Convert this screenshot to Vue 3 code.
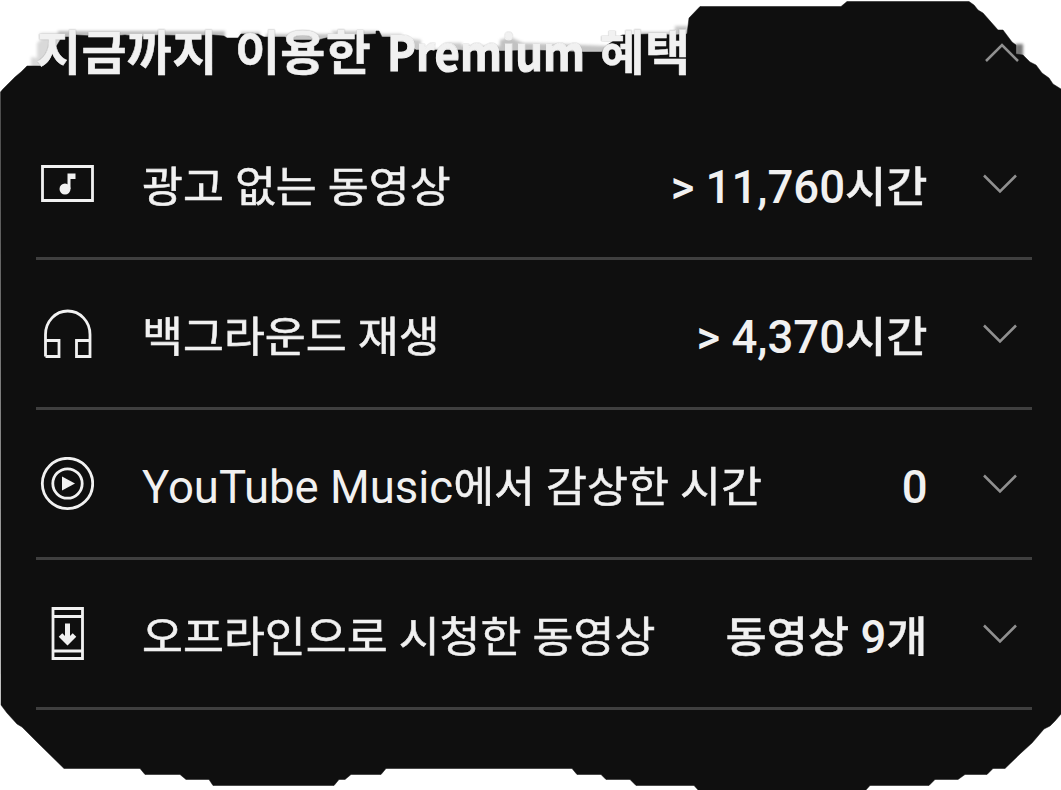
<script setup>
import { ref } from 'vue'

const benefits = ref([
  { icon: 'video', label: '광고 없는 동영상', value: '> 11,760시간' },
  { icon: 'audio', label: '백그라운드 재생', value: '> 4,370시간' },
  { icon: 'music', label: 'YouTube Music에서 감상한 시간', value: '0' },
  { icon: 'offline', label: '오프라인으로 시청한 동영상', value: '동영상 9개' },
])

// Hangul is drawn flatter and heavier than the latin letters, so split the runs
function runs(text) {
  return text.match(/[가-힣]+(?: [가-힣]+)*|[^가-힣]+/g).map((part) => ({
    part,
    hangul: /[가-힣]/.test(part),
  }))
}
</script>

<template>
  <main class="page">
    <!-- Torn sheet behind the list -->
    <svg class="sheet" viewBox="0 0 1061 790" aria-hidden="true">
      <g class="fringe">
        <path d="M40 33H72V60H44L38 68H31V57L37 58V43L41 40Z" fill="#d9d9d9" />
        <path d="M58 31H225V40H58Z" fill="#bdbdbd" />
        <path d="M241 32H260V40H241ZM266 34H331V42H290V39H266Z" fill="#c4c4c4" />
        <path d="M331 31H378L381 34H402V38L421 40V49H440L447 43H462V54H350Z" fill="#c9c9c9" />
        <path d="M460 46H500V40L510 37L523 43L560 44L607 46V53H460Z" fill="#c2c2c2" />
        <path d="M604 38H640V32H675V26H688V40H604Z" fill="#c5c5c5" />
        <path d="M1015 44H1023V57H1015Z" fill="#777777" />
      </g>
      <path
        class="edge"
        d="M0.5 92L3 89L8 84L15 77L21 72L27 66H40L48 60L62 37H76V35L92 36L105 37L125 35L139 37L159 35L189 36L213 35L224 36L227 38H238L241 34H258L264 37H285L290 40H318L330 37V35H350L376 34V31H379L382 37H399L408 44L416 50H460L466 51H508L530 50L558 51L580 52H602L606 46L622 35L652 34L674 35L687 34L689 18L700 6.500H841L847 1.500H969L974 5L978 10L983 13L998 30H1003L1012 42L1016 45V54L1023 55L1030 62L1036 65L1042 73L1049 78L1053 84L1061 89V714L1055 721L1050 726L1044 729L1032 743L1021 753L1005 768.500H993L987 774.500H965L958 779.500H935L929 785.500H870L865 791H699L694 785.500H636L630 779.500H606L601 774.500H577L572 768.500H386L381 774.500H351L345 779.500H339L334 785.500H213L209 779.500H186L180 774.500H145L140 768.500H64L39 744L22 727L17 724L7 713L1 705Z"
      />
    </svg>

    <section class="benefits">
      <header class="heading">
        <h1>
          <span class="korean">지금까지 이용한</span>
          <span class="brand">Premium</span>
          <span class="korean">혜택</span>
        </h1>
        <svg class="chevron" viewBox="0 0 36 22"><path d="M2 19L18 3L34 19" /></svg>
      </header>

      <ul class="list">
        <li v-for="item in benefits" :key="item.label" class="row" :class="item.icon">
          <svg class="icon" viewBox="0 0 54 54">
            <g v-if="item.icon === 'video'">
              <path class="line" d="M2.500 9.500H52.500V43.500H2.500Z" />
              <circle class="solid" cx="25" cy="32" r="5.500" />
              <path class="solid" d="M27.500 16.500H35.500V22H30.500V32H27.500Z" />
            </g>
            <g v-else-if="item.icon === 'audio'">
              <path class="line" d="M5.500 49.500V27.500A22.250 23.500 0 0 1 50 27.500V49.500H36.500V33.500H50M5.500 33.500H19V49.500H5.500" />
            </g>
            <g v-else-if="item.icon === 'music'">
              <circle class="line" cx="27.500" cy="26.500" r="25.200" />
              <circle class="line" cx="27.500" cy="26.500" r="14.700" />
              <path class="solid" d="M22 19.500L35 26.500L22 33.500Z" />
            </g>
            <g v-else>
              <path class="line" d="M13 1.500H42.500V51.500H13ZM13 9.500H42.500M13 44H42.500" />
              <path class="arrow" d="M27.500 16.500V35M20.500 28L27.500 35L34.500 28" />
            </g>
          </svg>
          <span class="label">
            <span v-for="run in runs(item.label)" :key="run.part" :class="{ hangul: run.hangul }">{{ run.part }}</span>
          </span>
          <strong class="value">
            <span v-for="run in runs(item.value)" :key="run.part" :class="{ hangul: run.hangul }">{{ run.part }}</span>
          </strong>
          <svg class="chevron" viewBox="0 0 36 22"><path d="M2 2.500L18 18.500L34 2.500" /></svg>
        </li>
      </ul>
    </section>
  </main>
</template>

<style>
body {
  background: #fff;
}
</style>

<style scoped>
.page {
  position: relative;
  width: 1061px;
  height: 790px;
  overflow: hidden;
  color: #f1f1f1;
  font-family: Roboto, "Noto Sans CJK KR", sans-serif;
}

.sheet {
  position: absolute;
  inset: 0;
  width: 1061px;
  height: 790px;
}

.fringe {
  filter: blur(1.5px);
}

.edge {
  fill: #0f0f0f;
  stroke: #0f0f0f;
  stroke-opacity: .5;
  stroke-width: 1;
}

.benefits {
  position: relative;
  padding: 0 29px 0 36px;
}

.heading {
  display: flex;
  align-items: center;
  height: 107px;
}

h1 {
  display: flex;
  flex: 1;
  gap: 16px;
  margin: 0;
  padding-bottom: 7px;
  font: bold 49px/60px "Noto Sans CJK KR", sans-serif;
  word-spacing: 6px;
  white-space: nowrap;
  text-shadow: 0 0 1px #333;
  -webkit-text-stroke: .5px #f1f1f1;
}

.korean {
  letter-spacing: .3px;
  transform: scaleY(.97);
}

.brand {
  margin-right: -26px;
  transform: scaleX(.89);
  transform-origin: left;
  -webkit-text-stroke: 1.2px #f1f1f1;
}

.list {
  margin: 0;
  padding: 3px 0 0;
  list-style: none;
}

.row {
  display: flex;
  align-items: center;
  box-sizing: border-box;
  height: 150px;
  padding-left: 4px;
  border-bottom: 3px solid #3f3f3f;
}

.icon {
  width: 54px;
  height: 54px;
  margin-right: 48px;
}

.line {
  fill: none;
  stroke: #f1f1f1;
  stroke-width: 2.8;
}

.solid {
  fill: #f1f1f1;
}

.arrow {
  fill: none;
  stroke: #f1f1f1;
  stroke-width: 5;
}

.label,
.value {
  display: flex;
  padding-top: 8px;
  font-size: 45.5px;
  line-height: 60px;
  white-space: pre;
}

.label {
  flex: 1;
}

.value {
  font-weight: 500;
}

.hangul {
  font-size: 44.5px;
  transform: scaleY(.95);
  -webkit-text-stroke: .6px #f1f1f1;
}

.value .hangul {
  font-size: 44.8px;
  -webkit-text-stroke: .4px #f1f1f1;
}

.chevron {
  width: 36px;
  height: 22px;
  margin: 0 14.5px 0 54px;
  fill: none;
  stroke: #909090;
  stroke-width: 2.5;
}

.heading .chevron {
  margin: 0 12.5px 2px 54px;
}
</style>
